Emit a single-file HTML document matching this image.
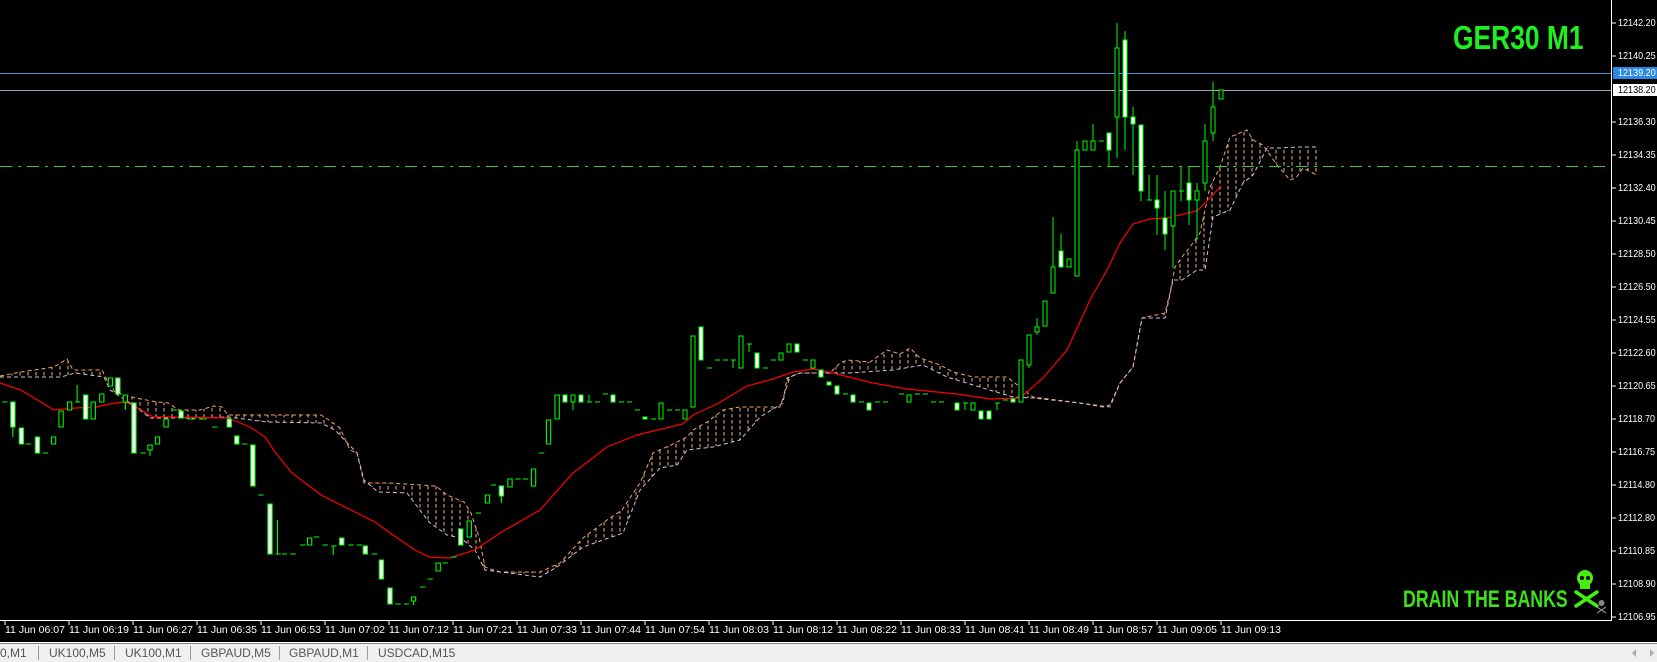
<!DOCTYPE html>
<html><head><meta charset="utf-8"><style>
html,body{margin:0;padding:0;background:#000;width:1657px;height:662px;overflow:hidden;font-family:"Liberation Sans",sans-serif}
.pl{position:absolute;left:1618px;color:#fff;font-size:10.5px;line-height:11px;transform:scaleX(0.86);transform-origin:left top;white-space:nowrap}
.tl{position:absolute;top:625px;color:#fff;font-size:10.5px;line-height:11px;white-space:nowrap}
.tab{position:absolute;top:647px;color:#555;font-size:12px;line-height:13px;white-space:nowrap}
.sep{position:absolute;top:646px;width:1px;height:14px;background:#999}
.bx{position:absolute;left:1613px;width:44px;height:12px;font-size:10.5px;line-height:12px}
.bx span{display:inline-block;margin-left:5px;transform:scaleX(0.86);transform-origin:left top;white-space:nowrap}
</style></head><body>
<svg width="1657" height="662" style="position:absolute;left:0;top:0" xmlns="http://www.w3.org/2000/svg">
<defs>
<pattern id="hatch" width="8" height="6" patternUnits="userSpaceOnUse">
<line x1="4" y1="0" x2="4" y2="3.5" stroke="#e9b48e" stroke-width="1"/>
</pattern>
</defs>
<g>
<polygon fill="url(#hatch)" points="0,376 21,372 54,367 67,359 73,370 102,370 107,380 115,392 125,395 136,398 157,402 168,403 179,410 200,410 214,406 222,407 228,415 321,415 329,420 340,428 350,450 357,453 364,483 389,483 436,486 447,495 464,502 471,513 479,537 485,567 500,572 540,572 560,563 583,538 607,520 622,510 640,483 653,453 673,444 687,437 693,430 707,422 723,410 740,407 780,407 790,377 800,373 830,373 840,363 847,360 870,362 887,350 900,354 910,348 920,358 940,365 953,372 973,377 1007,377 1020,387 1033,397 1080,403 1110,407 1120,383 1133,367 1142,318 1165,313 1170,293 1175,267 1182,257 1190,247 1200,233 1210,187 1220,167 1230,137 1247,130 1253,140 1263,145 1277,148 1300,147 1317,147 1317,175 1303,168 1296,178 1290,180 1277,165 1267,150 1253,175 1243,183 1230,210 1213,217 1205,270 1197,270 1182,280 1173,280 1165,318 1142,318 1133,367 1120,383 1110,405 1103,407 1080,403 1033,398 1013,397 973,385 947,377 923,365 893,370 850,373 800,373 787,378 783,403 760,417 740,440 713,447 687,450 677,465 660,468 640,490 623,533 583,547 557,567 540,577 485,570 475,550 461,538 447,535 429,522 407,493 378,492 364,480 357,453 335,430 321,423 268,422 228,417 193,418 150,418 136,407 110,390 104,377 75,373 61,377 0,377"/>
<polyline fill="none" stroke="#f4a460" stroke-width="1" stroke-dasharray="4,3" points="0,376 21,372 54,367 67,359 73,370 102,370 107,380 115,392 125,395 136,398 157,402 168,403 179,410 200,410 214,406 222,407 228,415 321,415 329,420 340,428 350,450 357,453 364,483 389,483 436,486 447,495 464,502 471,513 479,537 485,567 500,572 540,572 560,563 583,538 607,520 622,510 640,483 653,453 673,444 687,437 693,430 707,422 723,410 740,407 780,407 790,377 800,373 830,373 840,363 847,360 870,362 887,350 900,354 910,348 920,358 940,365 953,372 973,377 1007,377 1020,387 1033,397 1080,403 1110,407 1120,383 1133,367 1142,318 1165,313 1170,293 1175,267 1182,257 1190,247 1200,233 1210,187 1220,167 1230,137 1247,130 1253,140 1263,145 1277,165 1290,180 1296,178 1303,168 1317,175"/>
<polyline fill="none" stroke="#d8bfd8" stroke-width="1" stroke-dasharray="4,3" points="0,377 61,377 75,373 104,377 110,390 136,407 150,418 193,418 228,417 268,422 321,423 335,430 357,453 364,480 378,492 407,493 429,522 447,535 461,538 475,550 485,570 540,577 557,567 583,547 623,533 640,490 660,468 677,465 687,450 713,447 740,440 760,417 783,403 787,378 800,373 850,373 893,370 923,365 947,377 973,385 1013,397 1033,398 1080,403 1103,407 1110,405 1120,383 1133,367 1142,318 1165,318 1173,280 1182,280 1197,270 1205,270 1213,217 1230,210 1243,183 1253,175 1267,148 1277,148 1300,147 1317,147"/>
</g>
<polyline fill="none" stroke="#ff0000" stroke-width="1.2" points="0,383 21,390 54,410 75,408 96,407 115,403 125,402 136,407 153,417 171,417 228,418 250,427 265,437 275,452 292,473 321,495 357,513 375,522 393,535 415,550 429,557 450,558 475,550 500,533 540,510 573,473 607,447 637,435 683,424 693,415 717,404 747,386 773,379 793,372 813,369 833,373 873,383 907,389 957,394 990,399 1020,398 1043,378 1067,350 1090,300 1107,270 1120,243 1133,224 1150,219 1167,218 1197,211 1210,198 1221,186"/>
<line x1="0" y1="73.5" x2="1611" y2="73.5" stroke="#4a90d9"/>
<line x1="0" y1="90.5" x2="1611" y2="90.5" stroke="#a0a8b8"/>
<line x1="0" y1="166.5" x2="1606" y2="166.5" stroke="#32cd32" stroke-dasharray="12,6,3,6"/>
<!-- left candles (scaled) -->
<g transform="scale(1.0714,1)" stroke="#00ff00" stroke-width="1" fill="#000">
<g fill="#fff">
<rect x="10" y="402" width="4" height="25"/><rect x="18" y="428" width="4" height="16"/><rect x="33" y="437" width="4" height="16"/>
<rect x="78" y="395" width="4" height="24"/><rect x="108" y="378" width="4" height="16"/><rect x="123" y="403" width="4" height="50"/>
<rect x="167" y="411" width="4" height="7"/><rect x="212" y="419" width="4" height="8"/><rect x="219" y="436" width="4" height="8"/>
<rect x="234" y="445" width="4" height="41"/><rect x="250" y="504" width="4" height="50"/><rect x="317" y="538" width="4" height="7"/>
<rect x="339" y="546" width="4" height="8"/><rect x="354" y="560" width="4" height="19"/><rect x="362" y="588" width="4" height="16"/>
<rect x="428" y="529" width="4" height="16"/><rect x="466" y="486" width="4" height="10"/>
</g>
<rect x="48" y="437" width="4" height="7"/><rect x="55" y="411" width="4" height="16"/><rect x="63" y="402" width="4" height="8"/>
<rect x="85" y="402" width="4" height="17"/><rect x="93" y="394" width="4" height="8"/><rect x="101" y="378" width="4" height="8"/>
<rect x="115" y="395" width="4" height="7"/><rect x="138" y="445" width="4" height="5"/><rect x="145" y="437" width="4" height="7"/>
<rect x="153" y="419" width="4" height="8"/><rect x="287" y="538" width="4" height="7"/><rect x="384" y="597" width="4" height="4"/>
<rect x="407" y="563" width="4" height="8"/><rect x="436" y="521" width="4" height="16"/><rect x="453" y="495" width="4" height="8"/>
<rect x="474" y="479" width="4" height="8"/><rect x="496" y="469" width="4" height="17"/><rect x="510" y="420" width="4" height="24"/>
<rect x="518" y="395" width="4" height="24"/>
<path d="M12,427V437M72,385V402M117,402V410M140,450V456M259,520V554M311,546V555M386,601V605M468,496V503"/>
<path d="M2,402H7M24,444H29M40,453H45M70,402H75M131,453H136M160,410H165M175,419H182M186,419H193M198,427H203M226,444H231M241,495H246M257,554H262M263,554H268M271,554H276M280,545H285M293,537H298M301,545H306M309,546H314M325,545H330M333,545H338M347,554H352M369,604H374M377,604H382M392,587H397M399,579H404M413,563H418M421,557H426M444,513H449M458,485H463M481,479H486M488,479H493M503,453H508"/>
</g>
<!-- right candles -->
<g stroke="#00ff00" stroke-width="1" fill="#000">
<g fill="#fff">
<rect x="563" y="395" width="4" height="7"/><rect x="579" y="395" width="4" height="7"/><rect x="611" y="395" width="4" height="7"/>
<rect x="643" y="417" width="4" height="2"/><rect x="699" y="327" width="4" height="33"/><rect x="755" y="353" width="4" height="15"/>
<rect x="795" y="344" width="4" height="8"/><rect x="819" y="370" width="4" height="7"/><rect x="827" y="382" width="4" height="3"/>
<rect x="835" y="386" width="4" height="8"/><rect x="851" y="395" width="4" height="7"/><rect x="867" y="403" width="4" height="7"/>
<rect x="955" y="403" width="4" height="7"/><rect x="979" y="411" width="4" height="8"/><rect x="987" y="411" width="4" height="8"/>
<rect x="1011" y="399" width="4" height="3"/><rect x="1059" y="251" width="4" height="16"/><rect x="1107" y="133" width="4" height="17"/>
<rect x="1123" y="40" width="4" height="77"/><rect x="1131" y="117" width="4" height="7"/><rect x="1139" y="125" width="4" height="66"/>
<rect x="1155" y="200" width="4" height="8"/><rect x="1163" y="218" width="4" height="16"/><rect x="1187" y="183" width="4" height="17"/>
</g>
<rect x="571" y="395" width="4" height="7"/><rect x="659" y="403" width="4" height="16"/><rect x="683" y="410" width="4" height="9"/>
<rect x="691" y="336" width="4" height="71"/><rect x="739" y="336" width="4" height="32"/><rect x="779" y="353" width="4" height="7"/>
<rect x="787" y="344" width="4" height="8"/><rect x="811" y="360" width="4" height="8"/><rect x="907" y="395" width="4" height="7"/>
<rect x="971" y="403" width="4" height="7"/><rect x="1019" y="360" width="4" height="42"/><rect x="1027" y="335" width="4" height="30"/>
<rect x="1035" y="327" width="4" height="5"/><rect x="1043" y="301" width="4" height="25"/><rect x="1051" y="267" width="4" height="26"/>
<rect x="1067" y="259" width="4" height="8"/><rect x="1075" y="150" width="4" height="126"/><rect x="1083" y="141" width="4" height="9"/>
<rect x="1091" y="141" width="4" height="9"/><rect x="1115" y="48" width="4" height="69"/><rect x="1171" y="191" width="4" height="35"/>
<rect x="1195" y="191" width="4" height="9"/><rect x="1203" y="141" width="4" height="42"/><rect x="1211" y="107" width="4" height="26"/>
<rect x="1219" y="90" width="4" height="9"/>
<path d="M573,402V410M589,395V402M733,360V368M749,344V352M965,403V410M997,403V410M1053,217V267M1061,234V251M1077,141V150M1093,124V141M1109,150V166M1117,23V48M1117,117V158M1125,31V40M1125,117V150M1133,107V117M1133,124V175M1141,191V201M1149,175V200M1157,175V200M1157,208V235M1165,191V218M1165,234V250M1173,226V268M1181,166V201M1189,166V183M1189,200V225M1197,183V191M1197,200V240M1205,124V141M1205,183V191M1213,82V107M1213,133V141M1029,365V368M1037,318V327M1037,332V335"/>
<path d="M587,402H592M595,402H600M603,394H608M619,402H624M627,402H632M635,410H640M651,419H656M667,410H672M675,410H680M707,368H712M715,360H720M723,360H728M731,360H736M747,344H752M763,368H768M771,360H776M803,360H808M843,394H848M859,402H864M875,402H880M883,402H888M899,394H904M915,394H920M923,394H928M931,402H936M939,402H944M963,403H968M995,403H1000M1003,400H1008M1099,141H1104M1147,200H1152M1179,191H1184"/>
</g>
<line x1="0" y1="620.5" x2="1612" y2="620.5" stroke="#fff"/>
<line x1="1611.5" y1="0" x2="1611.5" y2="621" stroke="#fff"/>
<g stroke="#fff">
<path d="M1612,23H1616M1612,56H1616M1612,122H1616M1612,155H1616M1612,188H1616M1612,221H1616M1612,254H1616M1612,287H1616M1612,320H1616M1612,353H1616M1612,386H1616M1612,419H1616M1612,452H1616M1612,485H1616M1612,518H1616M1612,551H1616M1612,584H1616M1612,617H1616"/>
<path d="M5,621V625M69,621V625M133,621V625M197,621V625M261,621V625M325,621V625M389,621V625M453,621V625M517,621V625M581,621V625M645,621V625M709,621V625M773,621V625M837,621V625M901,621V625M965,621V625M1029,621V625M1093,621V625M1157,621V625M1221,621V625"/>
</g>
<g fill="#44ee11" stroke="#44ee11">
<path d="M1576,592L1597,606M1597,592L1576,606" stroke-width="3.5" stroke-linecap="round" fill="none"/>
<ellipse cx="1585" cy="578" rx="8" ry="8" stroke="none"/>
<rect x="1580" y="583" width="10" height="6" stroke="none"/>
<circle cx="1582" cy="578" r="2" fill="#000" stroke="none"/><circle cx="1588" cy="578" r="2" fill="#000" stroke="none"/>
</g>
<g fill="#888" stroke="#888">
<path d="M1597,607L1606,613M1606,607L1597,613" stroke-width="1.2" fill="none"/>
<circle cx="1601.5" cy="603" r="3" stroke="none"/>
</g>
<rect x="0" y="642" width="1657" height="1.5" fill="#fff"/>
<rect x="0" y="644" width="1657" height="18" fill="#f0f0f0"/>
<path d="M1636,649L1632,653L1636,657Z M1650,649L1654,653L1650,657Z" fill="#aaa"/>
</svg>
<div style="position:absolute;left:1453px;top:20px;color:#1ef01e;font-family:'Liberation Sans',sans-serif;font-weight:bold;font-size:33px;line-height:36px;transform:scaleX(0.80);transform-origin:left top;white-space:nowrap">GER30 M1</div>
<div style="position:absolute;left:1403px;top:587px;color:#3de01a;font-family:'Liberation Sans',sans-serif;font-weight:bold;font-size:24px;line-height:26px;transform:scaleX(0.74);transform-origin:left top;white-space:nowrap">DRAIN THE BANKS</div>
<div class="pl" style="top:18px">12142.20</div>
<div class="pl" style="top:51px">12140.25</div>
<div class="bx" style="top:67px;background:#2a88e6;color:#fff"><span>12139.20</span></div>
<div class="bx" style="top:84px;background:#fff;color:#000"><span>12138.20</span></div>
<div class="pl" style="top:117px">12136.30</div>
<div class="pl" style="top:150px">12134.35</div>
<div class="pl" style="top:183px">12132.40</div>
<div class="pl" style="top:216px">12130.45</div>
<div class="pl" style="top:249px">12128.50</div>
<div class="pl" style="top:282px">12126.50</div>
<div class="pl" style="top:315px">12124.55</div>
<div class="pl" style="top:348px">12122.60</div>
<div class="pl" style="top:381px">12120.65</div>
<div class="pl" style="top:414px">12118.70</div>
<div class="pl" style="top:447px">12116.75</div>
<div class="pl" style="top:480px">12114.80</div>
<div class="pl" style="top:513px">12112.80</div>
<div class="pl" style="top:546px">12110.85</div>
<div class="pl" style="top:579px">12108.90</div>
<div class="pl" style="top:612px">12106.95</div>
<div class="tl" style="left:5px">11 Jun 06:07</div>
<div class="tl" style="left:69px">11 Jun 06:19</div>
<div class="tl" style="left:133px">11 Jun 06:27</div>
<div class="tl" style="left:197px">11 Jun 06:35</div>
<div class="tl" style="left:261px">11 Jun 06:53</div>
<div class="tl" style="left:325px">11 Jun 07:02</div>
<div class="tl" style="left:389px">11 Jun 07:12</div>
<div class="tl" style="left:453px">11 Jun 07:21</div>
<div class="tl" style="left:517px">11 Jun 07:33</div>
<div class="tl" style="left:581px">11 Jun 07:44</div>
<div class="tl" style="left:645px">11 Jun 07:54</div>
<div class="tl" style="left:709px">11 Jun 08:03</div>
<div class="tl" style="left:773px">11 Jun 08:12</div>
<div class="tl" style="left:837px">11 Jun 08:22</div>
<div class="tl" style="left:901px">11 Jun 08:33</div>
<div class="tl" style="left:965px">11 Jun 08:41</div>
<div class="tl" style="left:1029px">11 Jun 08:49</div>
<div class="tl" style="left:1093px">11 Jun 08:57</div>
<div class="tl" style="left:1157px">11 Jun 09:05</div>
<div class="tl" style="left:1221px">11 Jun 09:13</div>
<div class="tab" style="left:0px">0,M1</div>
<div class="sep" style="left:38px"></div>
<div class="tab" style="left:49px">UK100,M5</div>
<div class="sep" style="left:114px"></div>
<div class="tab" style="left:125px">UK100,M1</div>
<div class="sep" style="left:190px"></div>
<div class="tab" style="left:201px">GBPAUD,M5</div>
<div class="sep" style="left:279px"></div>
<div class="tab" style="left:289px">GBPAUD,M1</div>
<div class="sep" style="left:367px"></div>
<div class="tab" style="left:378px">USDCAD,M15</div>
</body></html>
